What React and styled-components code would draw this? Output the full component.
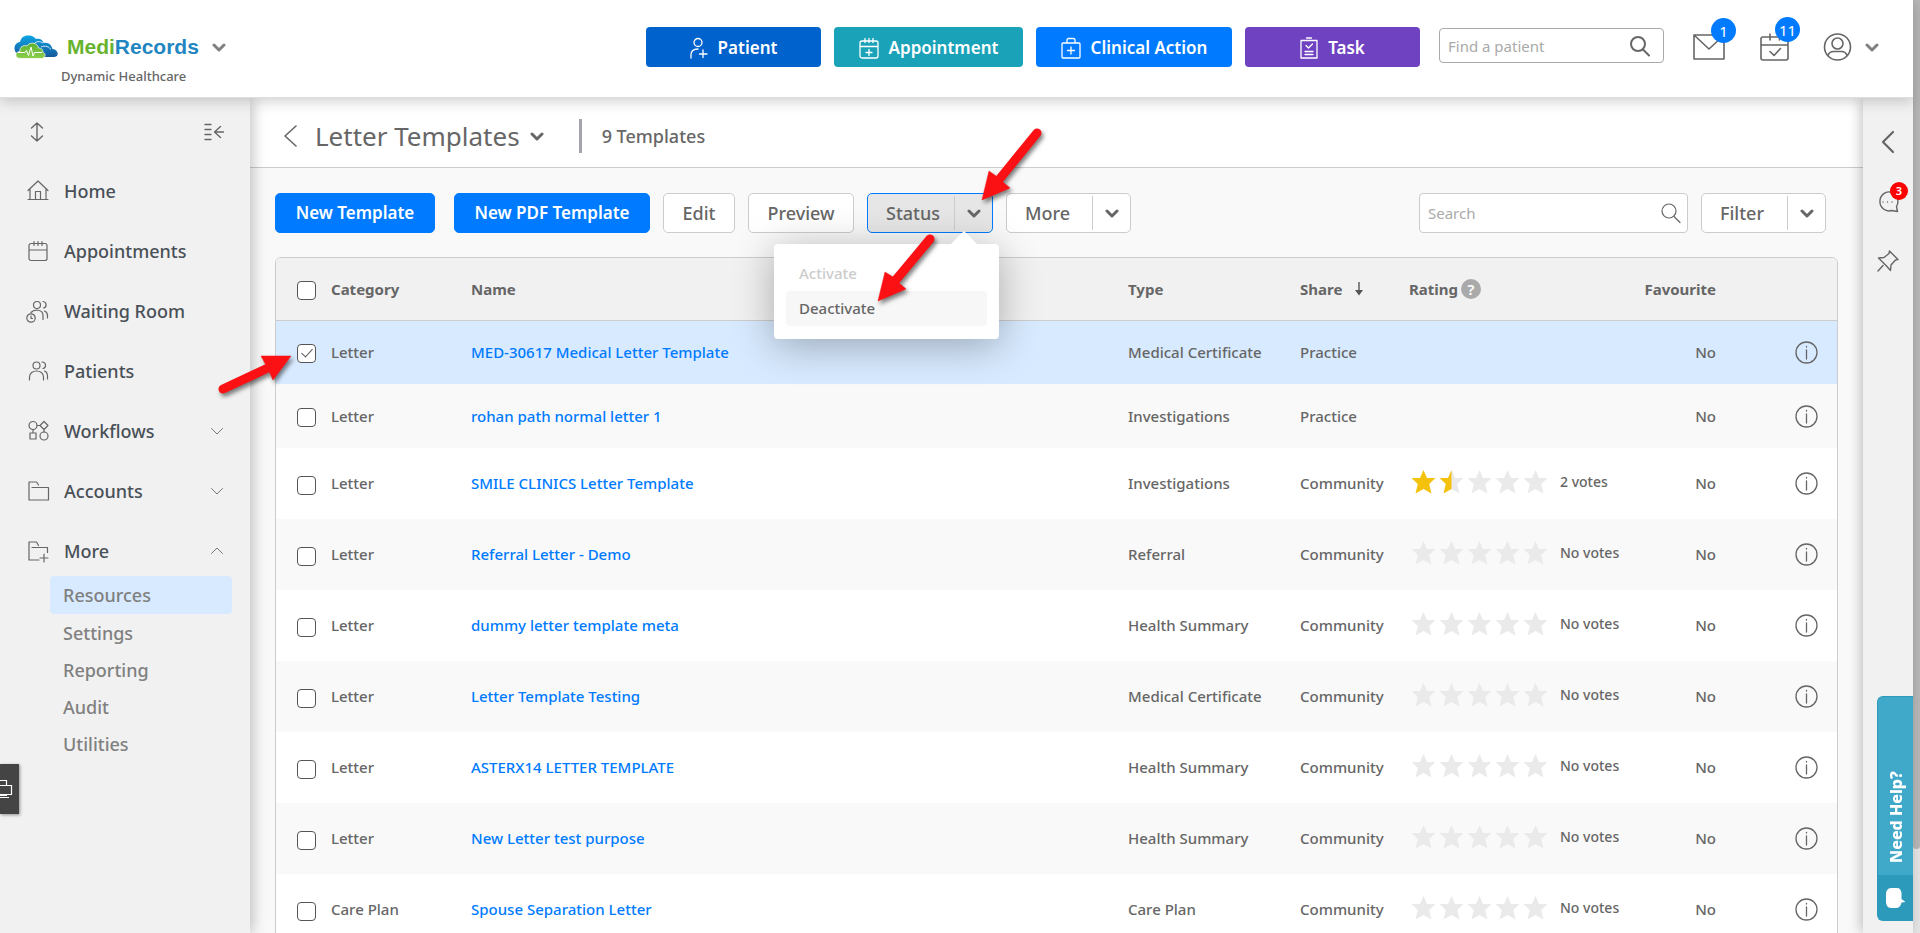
import React, { useState } from "react";
import styled, { createGlobalStyle, css } from "styled-components";

const Global = createGlobalStyle`
  *, *::before, *::after { box-sizing: border-box; }
  html, body, #root { height: 100%; }
  body { margin: 0; background: #f9f9f9; color: #666; font: 500 15px/20px "Noto Sans", sans-serif; }
  button, input { font: inherit; color: inherit; }
  button { cursor: pointer; }
  a { text-decoration: none; color: inherit; }
  ul { list-style: none; margin: 0; padding: 0; }
  h1 { margin: 0; }
`;

const Page = styled.div`
  position: relative;
  display: grid;
  grid-template-columns: minmax(0, 1fr) 7px;
  height: 100vh;
  overflow: hidden;
`;
const ScrollTrack = styled.div`
  background: #e6e6e6;
`;
const ScrollThumb = styled.div`
  height: 91%;
  background: #b8b8b8;
  border-radius: 0 0 4px 4px;
`;
const Shell = styled.div`
  display: flex;
  flex-direction: column;
  min-width: 0;
  min-height: 0;
`;
const Header = styled.header`
  position: relative;
  z-index: 3;
  flex: none;
  display: flex;
  align-items: flex-start;
  justify-content: space-between;
  height: 98px;
  padding: 27px 34px 0 14px;
  background: #fff;
  border-bottom: 1px solid #dedede;
  box-shadow: 0 2px 14px rgba(0, 0, 0, 0.22);
`;
const Brand = styled.div`
  display: flex;
  flex-direction: column;
`;
const BrandRow = styled.button`
  display: flex;
  align-items: center;
  height: 40px;
  padding: 0;
  border: 0;
  background: none;
`;
const BrandName = styled.span`
  margin: 0 13px 0 8px;
  font: bold 21px/24px "Liberation Sans", sans-serif;
  color: #1f86c1;
  b { color: #67b32e; }
`;
const Practice = styled.div`
  padding-left: 47px;
  font-size: 13px;
  line-height: 18px;
`;
const HeaderTools = styled.div`
  display: flex;
  align-items: center;
  gap: 13px;
  height: 40px;
`;
const QuickButton = styled.button`
  display: flex;
  align-items: center;
  justify-content: center;
  gap: 10px;
  width: ${(p) => p.$w}px;
  height: 40px;
  padding: 2px 0 0;
  border: 0;
  border-radius: 4px;
  background: ${(p) => p.$bg};
  color: #fff;
  font-size: 17px;
  font-weight: 600;
`;
const SearchBox = styled.label`
  display: flex;
  align-items: center;
  width: ${(p) => p.$w}px;
  height: ${(p) => p.$h}px;
  margin-left: ${(p) => p.$ml || 0}px;
  margin-bottom: ${(p) => p.$mb || 0}px;
  padding: 0 ${(p) => p.$pr}px 0 8px;
  border: 1px solid ${(p) => p.$line};
  border-radius: 4px;
  background: #fff;
  input {
    flex: 1;
    min-width: 0;
    padding: 0;
    border: 0;
    outline: 0;
    background: none;
    font-size: 15px;
    font-weight: 400;
  }
  input::placeholder { color: #aaa; opacity: 1; }
`;
const IconButton = styled.button`
  position: relative;
  display: flex;
  align-items: center;
  justify-content: center;
  padding: 0;
  border: 0;
  background: none;
  margin-left: ${(p) => p.$ml || 0}px;
`;
const Badge = styled.span`
  position: absolute;
  top: ${(p) => (p.$small ? -9 : -16)}px;
  right: ${(p) => (p.$small ? -9 : -11)}px;
  display: flex;
  align-items: center;
  justify-content: center;
  width: ${(p) => (p.$small ? 18 : 25)}px;
  height: ${(p) => (p.$small ? 18 : 25)}px;
  border-radius: 50%;
  background: ${(p) => (p.$small ? "#fe0000" : "#007bff")};
  color: #fff;
  font-size: ${(p) => (p.$small ? 11 : 15)}px;
  font-weight: ${(p) => (p.$small ? 600 : 400)};
`;

const Body = styled.div`
  flex: 1;
  display: grid;
  grid-template-columns: 250px minmax(0, 1fr) 50px;
  min-height: 0;
`;
const Sidebar = styled.nav`
  position: relative;
  z-index: 2;
  display: flex;
  flex-direction: column;
  background: #f1f1f1;
  box-shadow: 2px 0 14px rgba(0, 0, 0, 0.26);
`;
const SidebarTools = styled.div`
  display: flex;
  justify-content: space-between;
  padding: 24px 26px 19px 30px;
`;
const NavLink = styled.a`
  display: flex;
  align-items: center;
  height: 60px;
  padding: 0 27px 0 26px;
  color: #495057;
  font-size: 18px;
  svg:first-child { margin-right: 14px; }
  span { flex: 1; }
`;
const SubList = styled.ul`
  padding: 0 18px 0 50px;
  margin-top: -5px;
`;
const SubLink = styled.a`
  display: flex;
  align-items: center;
  height: ${(p) => (p.$active ? 38 : 37)}px;
  padding: 0 13px;
  border-radius: 4px;
  background: ${(p) => (p.$active ? "#d8eaff" : "transparent")};
  color: #808080;
  font-size: 18px;
`;
const DockTab = styled.button`
  position: absolute;
  left: 0;
  bottom: 119px;
  display: flex;
  align-items: center;
  width: 19px;
  height: 50px;
  padding: 0;
  border: 0;
  background: #444;
  box-shadow: 1px 1px 3px rgba(0, 0, 0, 0.4);
`;

const Main = styled.main`
  display: flex;
  flex-direction: column;
  min-width: 0;
  overflow: hidden;
  background: #f9f9f9;
`;
const TitleBar = styled.div`
  flex: none;
  display: flex;
  align-items: center;
  height: 70px;
  padding: 7px 33px 0;
  background: #fff;
  border-bottom: 1px solid #ccc;
`;
const Title = styled.h1`
  margin: 0 10px 0 18px;
  font-size: 26px;
  line-height: 36px;
  font-weight: 400;
`;
const Divider = styled.span`
  width: 3px;
  height: 34px;
  margin: 0 20px 0 35px;
  background: #a3a3ab;
`;
const Count = styled.span`
  font-size: 18px;
`;
const Toolbar = styled.div`
  flex: none;
  display: flex;
  align-items: center;
  gap: 13px;
  padding: 25px 37px 24px 25px;
`;
const Button = styled.button`
  height: 40px;
  padding: 0;
  width: ${(p) => p.$w}px;
  border: 1px solid #ccc;
  border-radius: 5px;
  background: #fff;
  font-size: 18px;
  font-weight: 500;
  ${(p) =>
    p.$primary &&
    css`
      border-color: #007bff;
      background: #007bff;
      color: #fff;
      font-size: 17px;
      font-weight: 600;
    `}
`;
const Split = styled.div`
  position: relative;
  display: flex;
  align-items: center;
  width: ${(p) => p.$w}px;
  height: 40px;
  border: 1px solid ${(p) => (p.$open ? "#007bff" : "#ccc")};
  border-radius: 5px;
  background: ${(p) => (p.$open ? "#e6e6e6" : "#fff")};
`;
const SplitMain = styled.button`
  flex: 1;
  height: 34px;
  padding: 0 0 0 18px;
  border: 0;
  border-right: 1px solid #ccc;
  background: none;
  font-size: 18px;
  text-align: left;
`;
const SplitToggle = styled.button`
  display: flex;
  align-items: center;
  justify-content: center;
  width: 37px;
  height: 38px;
  padding: 0;
  border: 0;
  background: none;
`;
const Menu = styled.div`
  position: absolute;
  z-index: 4;
  top: 50px;
  right: -7px;
  width: 225px;
  padding: 12px 12px 13px;
  border-radius: 4px;
  background: #fff;
  box-shadow: 0 6px 40px rgba(0, 0, 0, 0.3);
  &::before {
    content: "";
    position: absolute;
    top: -13px;
    right: 22px;
    border: 13px solid transparent;
    border-top: 0;
    border-bottom-color: #fff;
  }
`;
const MenuItem = styled.button`
  display: block;
  width: 100%;
  height: 35px;
  padding: 0 13px 2px;
  border: 0;
  border-radius: 4px;
  background: ${(p) => (p.$hover ? "#f7f7f7" : "none")};
  color: ${(p) => (p.disabled ? "#ccc" : "#666")};
  text-align: left;
`;
const Spacer = styled.div`
  flex: 1;
`;
const Gap = styled.span`
  width: ${(p) => p.$w}px;
  margin-right: -13px;
`;

const TableFrame = styled.div`
  margin: 0 25px;
  border: 1px solid #ccc;
  border-radius: 6px 6px 0 0;
  background: #fff;
  overflow: hidden;
  flex: none;
`;
const Table = styled.table`
  width: 100%;
  table-layout: fixed;
  border-collapse: collapse;
  th, td { padding: 0 0 0 10px; text-align: left; white-space: nowrap; }
  th { height: 62px; font-weight: 700; background: #f1f1f1; border-bottom: 1px solid #ccc; }
  th:first-child, td:first-child { padding: 0 0 0 21px; }
  th.end, td.end { padding-right: 10px; text-align: right; }
  td.info { padding: 0 19px 0 0; text-align: right; }
`;
const Row = styled.tr`
  height: ${(p) => (p.$tall ? 71 : 64)}px;
  background: ${(p) => (p.$selected ? "#d8eaff" : p.$odd ? "#f9f9f9" : "#fff")};
  td:not(:first-child):not(.info) { padding-bottom: ${(p) => (p.$tall ? 2 : 0)}px; }
`;
const TemplateLink = styled.a`
  color: #007bff;
`;
const Check = styled.input`
  appearance: none;
  display: block;
  width: 19px;
  height: 19px;
  margin: 3px 0 0;
  border: 1px solid #555;
  border-radius: 4px;
  background: #fff;
  &:checked::before {
    content: "";
    display: block;
    width: 6px;
    height: 11px;
    margin: 1px 0 0 6px;
    border: solid #555;
    border-width: 0 1px 1px 0;
    transform: rotate(42deg);
  }
`;
const HeadFlex = styled.span`
  display: flex;
  align-items: center;
  gap: ${(p) => p.$gap}px;
`;
const Help = styled.button`
  width: 20px;
  height: 20px;
  padding: 0;
  border: 0;
  border-radius: 50%;
  background: #aaa;
  color: #fff;
  font-size: 15px;
  line-height: 18px;
  font-weight: 600;
`;
const Rating = styled.span`
  display: flex;
  align-items: center;
  padding: 0 0 2px 2px;
  font-size: 14px;
  svg { flex: none; margin-right: 3px; }
  span { margin-left: 9px; }
`;
const InfoButton = styled.button`
  padding: 0;
  border: 0;
  background: none;
  vertical-align: middle;
  svg { display: block; }
`;

const Rail = styled.aside`
  position: relative;
  z-index: 2;
  display: flex;
  flex-direction: column;
  align-items: center;
  background: #f1f1f1;
  box-shadow: -2px 0 12px rgba(0, 0, 0, 0.24);
  padding-top: 32px;
  gap: 37px;
`;
const HelpTab = styled.button`
  position: absolute;
  right: 0;
  bottom: 12px;
  display: flex;
  flex-direction: column;
  width: 36px;
  height: 225px;
  padding: 0;
  border: 1px solid #2c9bbb;
  border-right: 0;
  border-radius: 6px 0 0 6px;
  background: #40a9c9;
  color: #fff;
  overflow: hidden;
`;
const HelpText = styled.span`
  flex: 1;
  width: 100%;
  display: flex;
  align-items: center;
  padding-top: 12px;
  writing-mode: vertical-rl;
  transform: rotate(180deg);
  font: 800 16px/36px "Noto Sans", sans-serif;
`;
const HelpIcon = styled.span`
  display: flex;
  align-items: center;
  justify-content: center;
  width: 100%;
  height: 45px;
  background: #2c9bbb;
`;
const Annotations = styled.svg`
  position: absolute;
  z-index: 6;
  top: 0;
  left: 0;
  pointer-events: none;
  filter: drop-shadow(2px 3px 2px rgba(0, 0, 0, 0.5));
`;

const Icon = ({ w = 20, h = 20, box, sw = 1, color = "#666", children }) => (
  <svg width={w} height={h} viewBox={box || `0 0 ${w} ${h}`} fill="none" stroke={color} strokeWidth={sw} strokeLinecap="round" strokeLinejoin="round" aria-hidden="true">
    {children}
  </svg>
);
const Chevron = ({ sw = 3, color }) => (
  <Icon w={14} h={9} sw={sw} color={color}>
    <path d="M2 2l5 5 5-5" />
  </Icon>
);
const ThinChevron = ({ up }) => (
  <Icon w={12} h={8} color="#777">
    <path d={up ? "M.5 6.500L6 1l5.500 5.500" : "M.5 1.500L6 7l5.500-5.500"} />
  </Icon>
);
const Search = ({ sw = 1 }) => (
  <Icon w={20} h={22} sw={sw}>
    <circle cx="8" cy="9" r="7" />
    <path d="M13 14.500l6 6" />
  </Icon>
);

const navIcons = {
  Home: <path d="M2 11.500L12 2l10 9.500M4 10v10.500M20 10v10.500M2 20.500h20M9.500 20.500v-8h5v8" />,
  Appointments: <path d="M5 4.500h14a2 2 0 012 2v13a2 2 0 01-2 2H5a2 2 0 01-2-2v-13a2 2 0 012-2zM3 11h18M8 2.500v4M12 2.500v4M16 2.500v4" />,
  "Waiting Room": (
    <>
      <circle cx="11" cy="6" r="3.500" />
      <path d="M5 13.500c3-3.500 12-3.500 12 3v4M17 2.500c4 .5 4 6 .5 6.500M18.500 12c2 .8 3 2.500 3 4.500v2.500" />
      <circle cx="5" cy="19" r="4.200" />
      <path d="M5 17v2.500h1.500" />
    </>
  ),
  Patients: (
    <>
      <circle cx="10.500" cy="6.500" r="3.500" />
      <path d="M3.500 21v-3c0-8 14-8 14 0v3M16 3c4.500 0 4.500 6 1 6.500M18.500 12c2.500 1 3 3 3 5v3" />
    </>
  ),
  Workflows: (
    <>
      <circle cx="7" cy="6.500" r="4" />
      <circle cx="18" cy="17" r="4" />
      <path d="M18 2.500l4 4-4 4-4-4zM11 6.500h3M7 10.500v3.500M18 10.500V13M4 14h6v6H4z" />
    </>
  ),
  Accounts: <path d="M3 21V3h7.500l2 3M3 21h19.500V8.500H6" />,
  More: <path d="M3 21V3h7.500l2 3.500M6 8.500h15.500v5M3 21h10M18 15v8M14 19h8" />,
};
const navItems = [
  ["Home"], ["Appointments"], ["Waiting Room"], ["Patients"],
  ["Workflows", "down"], ["Accounts", "down"], ["More", "up"],
];
const subItems = ["Resources", "Settings", "Reporting", "Audit", "Utilities"];

const rows = [
  { c: "Letter", n: "MED-30617 Medical Letter Template", t: "Medical Certificate", s: "Practice" },
  { c: "Letter", n: "rohan path normal letter 1", t: "Investigations", s: "Practice" },
  { c: "Letter", n: "SMILE CLINICS Letter Template", t: "Investigations", s: "Community", r: 1.5, v: "2 votes" },
  { c: "Letter", n: "Referral Letter - Demo", t: "Referral", s: "Community", r: 0, v: "No votes" },
  { c: "Letter", n: "dummy letter template meta", t: "Health Summary", s: "Community", r: 0, v: "No votes" },
  { c: "Letter", n: "Letter Template Testing", t: "Medical Certificate", s: "Community", r: 0, v: "No votes" },
  { c: "Letter", n: "ASTERX14 LETTER TEMPLATE", t: "Health Summary", s: "Community", r: 0, v: "No votes" },
  { c: "Letter", n: "New Letter test purpose", t: "Health Summary", s: "Community", r: 0, v: "No votes" },
  { c: "Care Plan", n: "Spouse Separation Letter", t: "Care Plan", s: "Community", r: 0, v: "No votes" },
];

const Star = ({ fill }) => (
  <svg width="25" height="24" viewBox="0 0 24 24" aria-hidden="true">
    <path d="M12 0l3.500 8H24l-6.300 6L20 23.500l-8-4.600-8 4.600L6.300 14 0 8h8.500z" fill={fill === 1 ? "#f4c20d" : "#eaeaea"} />
    {fill === 0.5 && <path d="M12 0v18.900L4 23.500 6.300 14 0 8h8.500z" fill="#f4c20d" />}
  </svg>
);

const Logo = () => (
  <svg width="45" height="24" viewBox="0 0 45 24" aria-hidden="true">
    <defs>
      <linearGradient id="sky" x1="0" y1="0" x2="0" y2="1">
        <stop offset="0" stopColor="#0da5e4" />
        <stop offset="1" stopColor="#15589b" />
      </linearGradient>
      <linearGradient id="leaf" x1="0" y1="0" x2="0" y2="1">
        <stop offset="0" stopColor="#5cb030" />
        <stop offset="1" stopColor="#8ccf4d" />
      </linearGradient>
    </defs>
    <path d="M4 19C-1 17-1 8 6 7 7 2 11 0 15 .5c4 0 6 2.500 7 3.500 4-1 7 1 7.500 4 6-1 8 3 9 6 6 .5 7 7.500 2 8H6z" fill="url(#sky)" />
    <path d="M27 12c4-2 9 0 9.500 2.500M20 9c2-3 6-3 9-1" fill="none" stroke="#fff" strokeWidth=".8" />
    <path d="M6 23.500c-5.500 0-5.500-7 0-7C5 12 10 9.500 13 11c3-5 11-3 11.500 2 4 0 5 3 4 4 4 1 3 6.500-1 6.500z" fill="url(#leaf)" stroke="#fff" strokeWidth=".7" />
    <path d="M4 17.500h7l1.500-2 2 5L17 12l2 9 1.500-3.500H28" fill="none" stroke="#fff" strokeWidth="1" />
  </svg>
);

export default function App() {
  const [selected, setSelected] = useState([0]);
  const toggle = (i) => setSelected((s) => (s.includes(i) ? s.filter((x) => x !== i) : [...s, i]));
  return (
    <Page>
      <Global />
      <Shell>
        <Header>
          <Brand>
            <BrandRow type="button" aria-label="MediRecords practice menu">
              <Logo />
              <BrandName><b>Medi</b>Records</BrandName>
              <Chevron color="#808080" />
            </BrandRow>
            <Practice>Dynamic Healthcare</Practice>
          </Brand>
          <HeaderTools>
            <QuickButton type="button" $w={175} $bg="#0062cc">
              <Icon w={18} h={22} color="#fff" sw={1.3}>
                <circle cx="8" cy="5.500" r="4" />
                <path d="M1 21v-3c0-4 3-6 7-6M13 13v7.500M9.500 17h7.500" />
              </Icon>
              Patient
            </QuickButton>
            <QuickButton type="button" $w={189} $bg="#1aa2b8">
              <Icon w={20} h={22} color="#fff" sw={1.3}>
                <path d="M3 4h14a2 2 0 012 2v13a2 2 0 01-2 2H3a2 2 0 01-2-2V6a2 2 0 012-2zM1 9.500h18M6 1.500v4M10 1.500v4M14 1.500v4M10 12.500v6M7 15.500h6" />
              </Icon>
              Appointment
            </QuickButton>
            <QuickButton type="button" $w={196} $bg="#007bff">
              <Icon w={20} h={22} color="#fff" sw={1.3}>
                <path d="M2 6h16a1 1 0 011 1v13a1 1 0 01-1 1H2a1 1 0 01-1-1V7a1 1 0 011-1zM6 6V3a1.500 1.500 0 011.500-1.500h5A1.500 1.500 0 0114 3v3M10 10v7M6.500 13.500h7" />
              </Icon>
              Clinical Action
            </QuickButton>
            <QuickButton type="button" $w={175} $bg="#6f42c1">
              <Icon w={18} h={22} color="#fff" sw={1.3}>
                <path d="M1 3.500h16V21H1zM6.500 1h5M6 8.500l2.500 2.500L12.500 7M5 14.500h8M5 17.500h8" />
              </Icon>
              Task
            </QuickButton>
            <SearchBox $w={225} $h={35} $ml={6} $mb={3} $pr={13} $line="#aaa">
              <input aria-label="Find a patient" placeholder="Find a patient" />
              <Search sw={2} />
            </SearchBox>
            <IconButton type="button" aria-label="Messages" $ml={16}>
              <Icon w={32} h={26} sw={1.6}>
                <path d="M1 1h30v24H1zM1 1l15 14L31 1" />
              </Icon>
              <Badge>1</Badge>
            </IconButton>
            <IconButton type="button" aria-label="Calendar" $ml={22}>
              <Icon w={29} h={28} sw={1.6}>
                <path d="M3 4h23a2 2 0 012 2v19a2 2 0 01-2 2H3a2 2 0 01-2-2V6a2 2 0 012-2zM1 12h27M10 1v6M19.500 1v6M10 18.500l4 4 6.500-7" />
              </Icon>
              <Badge>11</Badge>
            </IconButton>
            <IconButton type="button" aria-label="Account" $ml={21}>
              <Icon w={29} h={28} sw={1.6}>
                <circle cx="14.500" cy="14" r="13" />
                <circle cx="14.500" cy="10.500" r="5.500" />
                <path d="M5 22.500c1-3 3-4 5.500-4h8c2.500 0 4.500 1 5.500 4" />
              </Icon>
            </IconButton>
            <Chevron color="#808080" />
          </HeaderTools>
        </Header>
        <Body>
          <Sidebar aria-label="Primary">
            <SidebarTools>
              <IconButton type="button" aria-label="Resize menu">
                <Icon w={14} h={20} sw={1.4}>
                  <path d="M7 1v18M1.500 6L7 1l5.500 5M1.500 14L7 19l5.500-5" />
                </Icon>
              </IconButton>
              <IconButton type="button" aria-label="Collapse menu">
                <Icon w={20} h={18} sw={1.4}>
                  <path d="M1 1.500h6M1 6.500h6M1 11.500h6M1 16.500h6M19.500 9H11M16.500 3.500L10.500 9l6 5.500" />
                </Icon>
              </IconButton>
            </SidebarTools>
            {navItems.map(([label, arrow]) => (
              <NavLink key={label} href="#">
                <Icon w={24} h={24} sw={1.2}>{navIcons[label]}</Icon>
                <span>{label}</span>
                {arrow && <ThinChevron up={arrow === "up"} />}
              </NavLink>
            ))}
            <SubList>
              {subItems.map((s, i) => (
                <li key={s}><SubLink href="#" $active={i === 0}>{s}</SubLink></li>
              ))}
            </SubList>
            <DockTab type="button" aria-label="Devices">
              <svg width="14" height="20" viewBox="0 0 14 20" fill="none" stroke="#fff" strokeWidth="1.200" aria-hidden="true">
                <path d="M0 1.500h6.500V6M0 6.500h11.500v9H0M0 18.500h9M0 16.500h7" />
              </svg>
            </DockTab>
          </Sidebar>
          <Main>
            <TitleBar>
              <IconButton type="button" aria-label="Back">
                <Icon w={14} h={22} sw={1.6}><path d="M13 1L2 11l11 10" /></Icon>
              </IconButton>
              <Title>Letter Templates</Title>
              <Chevron />
              <Divider />
              <Count>9 Templates</Count>
            </TitleBar>
            <Toolbar>
              <Button type="button" $primary $w={160}>New Template</Button>
              <Gap $w={6} />
              <Button type="button" $primary $w={196}>New PDF Template</Button>
              <Button type="button" $w={72}>Edit</Button>
              <Button type="button" $w={106}>Preview</Button>
              <Split $w={126} $open>
                <SplitMain type="button">Status</SplitMain>
                <SplitToggle type="button" aria-label="Status options" aria-expanded="true"><Chevron /></SplitToggle>
                <Menu role="menu">
                  <MenuItem type="button" role="menuitem" disabled>Activate</MenuItem>
                  <MenuItem type="button" role="menuitem" $hover>Deactivate</MenuItem>
                </Menu>
              </Split>
              <Split $w={125}>
                <SplitMain type="button">More</SplitMain>
                <SplitToggle type="button" aria-label="More options"><Chevron /></SplitToggle>
              </Split>
              <Spacer />
              <SearchBox $w={269} $h={40} $pr={6} $line="#ccc">
                <input aria-label="Search templates" placeholder="Search" />
                <Search sw={1.2} />
              </SearchBox>
              <Split $w={125}>
                <SplitMain type="button">Filter</SplitMain>
                <SplitToggle type="button" aria-label="Filter options"><Chevron /></SplitToggle>
              </Split>
            </Toolbar>
            <TableFrame>
              <Table>
                <colgroup>
                  <col width="45" /><col width="140" /><col /><col width="172" />
                  <col width="109" /><col width="221" /><col width="106" /><col width="111" />
                </colgroup>
                <thead>
                  <tr>
                    <th><Check type="checkbox" aria-label="Select all" /></th>
                    <th>Category</th>
                    <th>Name</th>
                    <th>Type</th>
                    <th>
                      <HeadFlex $gap={12}>
                        Share
                        <svg width="10" height="14" viewBox="0 0 10 14" aria-hidden="true"><path d="M4.300 0h1.400v8H9L5 13.500 1 8h3.300z" fill="#555" /></svg>
                      </HeadFlex>
                    </th>
                    <th><HeadFlex $gap={3}>Rating <Help type="button" aria-label="About ratings">?</Help></HeadFlex></th>
                    <th className="end">Favourite</th>
                    <th aria-label="Details" />
                  </tr>
                </thead>
                <tbody>
                  {rows.map((r, i) => (
                    <Row key={r.n} $tall={i > 1} $odd={i % 2 === 1} $selected={selected.includes(i)}>
                      <td><Check type="checkbox" aria-label={`Select ${r.n}`} checked={selected.includes(i)} onChange={() => toggle(i)} /></td>
                      <td>{r.c}</td>
                      <td><TemplateLink href="#">{r.n}</TemplateLink></td>
                      <td>{r.t}</td>
                      <td>{r.s}</td>
                      <td>
                        {r.v && (
                          <Rating>
                            {[0, 1, 2, 3, 4].map((k) => (
                              <Star key={k} fill={Math.max(0, Math.min(1, r.r - k))} />
                            ))}
                            <span>{r.v}</span>
                          </Rating>
                        )}
                      </td>
                      <td className="end">No</td>
                      <td className="info">
                        <InfoButton type="button" aria-label="Details">
                          <Icon w={23} h={23} sw={1.3}>
                            <circle cx="11.500" cy="11.500" r="10.500" />
                            <path d="M11.500 9v9M11.500 5.500v.5" />
                          </Icon>
                        </InfoButton>
                      </td>
                    </Row>
                  ))}
                </tbody>
              </Table>
            </TableFrame>
          </Main>
          <Rail aria-label="Side tools">
            <IconButton type="button" aria-label="Expand panel">
              <Icon w={14} h={24} sw={2.2}><path d="M12 2L2 12l10 10" /></Icon>
            </IconButton>
            <IconButton type="button" aria-label="Chat">
              <Icon w={22} h={22} sw={1.4}>
                <path d="M20.500 20.500l-1-5a9 9.500 0 10-5 4zM6 11v.1M10.500 11v.1M15 11v.1" />
              </Icon>
              <Badge $small>3</Badge>
            </IconButton>
            <IconButton type="button" aria-label="Pin">
              <Icon w={22} h={22} sw={1.4}>
                <path d="M12.500 1l8.500 8.500-2.500.5-4.500 5-.5 5.500-4-4.500-4-4-4-4 5.500-.5 5-4zM6 15.500L1 21" />
              </Icon>
            </IconButton>
            <HelpTab type="button">
              <HelpText>Need Help?</HelpText>
              <HelpIcon>
                <svg width="20" height="22" viewBox="0 0 20 22" aria-hidden="true">
                  <path d="M5 1h6c3 0 4 2 4.500 5v6l4 3-4 .5C15 19 13 21 10 21H5c-3 0-5-3-5-6V7c0-3 2-6 5-6z" fill="#fff" />
                </svg>
              </HelpIcon>
            </HelpTab>
          </Rail>
        </Body>
      </Shell>
      <ScrollTrack><ScrollThumb /></ScrollTrack>
      <Annotations width="1060" height="400" viewBox="0 0 1060 400" aria-hidden="true">
        <g fill="#fb1014" stroke="#fb1014">
          <path d="M1037 133L998 181M930 239L895 281M223 389L270 367" strokeWidth="9" strokeLinecap="round" />
          <path d="M982 200l7-29 7 5 8 7 6 5zM878 301l7-29 8 5 6 6 7 6zM291 356l-30 0 5 9 3 6 4 9z" strokeWidth="0.500" />
        </g>
      </Annotations>
    </Page>
  );
}
